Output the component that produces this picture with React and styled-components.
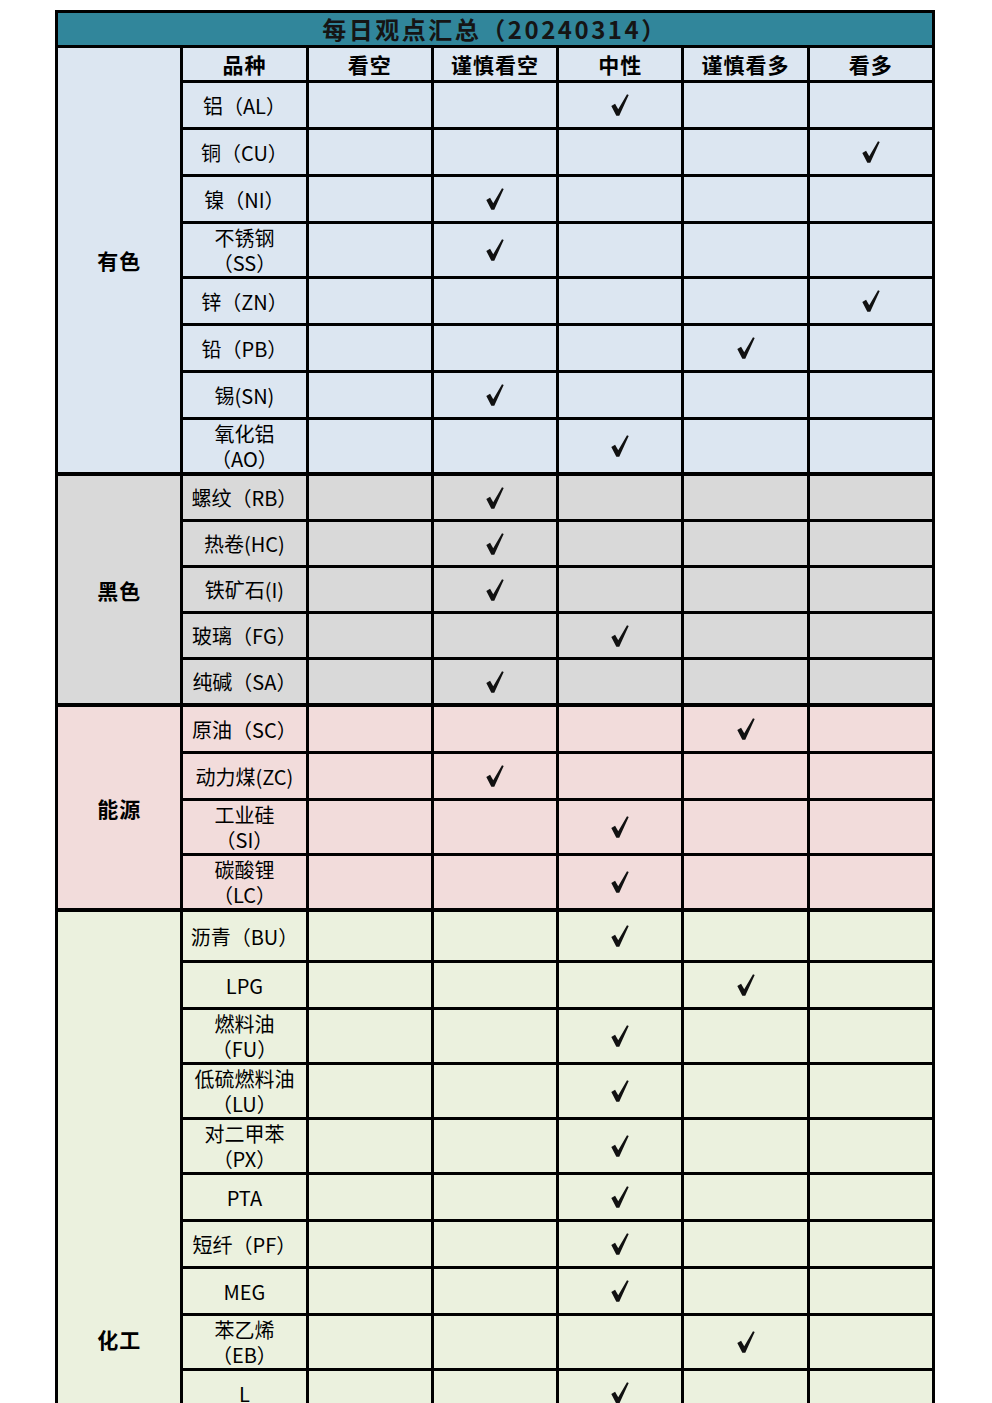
import React from "react";
import styled, { createGlobalStyle } from "styled-components";

// colors
const colors = {
  title: "#31869b",
  line: "#000000",
  nonferrous: "#dce6f1",
  ferrous: "#d9d9d9",
  energy: "#f2dcdb",
  chemical: "#ebf1de",
};

const GlobalStyle = createGlobalStyle`
  html, body {
    margin: 0;
    padding: 0;
    background: #ffffff;
  }
  body {
    font-family: "Noto Sans CJK SC", "Noto Sans", sans-serif;
    color: #000;
  }
`;

const StylePage = styled.div`
  padding: 10px 2px 0 0;
  display: flex;
  justify-content: center;
  overflow: hidden;
`;

const StyleTable = styled.table`
  width: 880px;
  table-layout: fixed;
  border-collapse: collapse;
  border: 3px solid ${colors.line};
  td,
  th {
    border: 3px solid ${colors.line};
    padding: 0;
    text-align: center;
    vertical-align: middle;
  }
`;

const TitleCell = styled.th`
  background: ${colors.title};
  height: 32px;
  font-size: 24px;
  font-weight: 700;
  color: #151515;
  letter-spacing: 2.5px;
  line-height: 32px;
`;

const HeadCell = styled.th`
  background: ${colors.nonferrous};
  height: 32px;
  font-size: 21px;
  font-weight: 700;
  letter-spacing: 1px;
  line-height: 32px;
`;

const GroupRow = styled.tr`
  & > td {
    border-top-width: ${(p) => (p.$first ? "4px" : "3px")};
  }
`;

const CategoryCell = styled.td`
  background: ${(p) => p.$bg};
  font-size: 21px;
  font-weight: 700;
  letter-spacing: 1px;
`;

const NameCell = styled.td`
  background: ${(p) => p.$bg};
  height: ${(p) => p.$h}px;
  font-size: 20px;
  line-height: 25px;
  white-space: nowrap;
  overflow: hidden;
`;

const MarkCell = styled.td`
  background: ${(p) => p.$bg};
`;

const Check = styled.svg`
  display: block;
  margin: 0 auto;
  width: 18px;
  height: 22px;
`;

const CheckMark = () => (
  <Check viewBox="0 0 17 21">
    <path d="M0.2 11.4 L3.8 9.4 L6.8 14.6 L15.2 0.2 L16.8 1 L7.8 20.8 L5 20.8 Z" fill="#111" />
  </Check>
);

const views = ["看空", "谨慎看空", "中性", "谨慎看多", "看多"];

// mark: index in views, h: row height override
const groups = [
  {
    name: "有色",
    bg: colors.nonferrous,
    h: 44,
    rows: [
      { name: ["铝（AL）"], mark: 2 },
      { name: ["铜（CU）"], mark: 4 },
      { name: ["镍（NI）"], mark: 1 },
      { name: ["不锈钢", "（SS）"], mark: 1 },
      { name: ["锌（ZN）"], mark: 4 },
      { name: ["铅（PB）"], mark: 3 },
      { name: ["锡(SN)"], mark: 1 },
      { name: ["氧化铝", "（AO）"], mark: 2 },
    ],
  },
  {
    name: "黑色",
    bg: colors.ferrous,
    h: 43,
    rows: [
      { name: ["螺纹（RB）"], mark: 1 },
      { name: ["热卷(HC)"], mark: 1 },
      { name: ["铁矿石(I)"], mark: 1 },
      { name: ["玻璃（FG）"], mark: 2 },
      { name: ["纯碱（SA）"], mark: 1 },
    ],
  },
  {
    name: "能源",
    bg: colors.energy,
    h: 44,
    rows: [
      { name: ["原油（SC）"], mark: 3 },
      { name: ["动力煤(ZC)"], mark: 1 },
      { name: ["工业硅", "（SI）"], mark: 2 },
      { name: ["碳酸锂", "（LC）"], mark: 2 },
    ],
  },
  {
    name: "化工",
    bg: colors.chemical,
    h: 44,
    rows: [
      { name: ["沥青（BU）"], mark: 2, h: 48 },
      { name: ["LPG"], mark: 3 },
      { name: ["燃料油", "（FU）"], mark: 2 },
      { name: ["低硫燃料油", "（LU）"], mark: 2 },
      { name: ["对二甲苯", "（PX）"], mark: 2 },
      { name: ["PTA"], mark: 2 },
      { name: ["短纤（PF）"], mark: 2 },
      { name: ["MEG"], mark: 2 },
      { name: ["苯乙烯", "（EB）"], mark: 3 },
      { name: ["L"], mark: 2 },
      { name: ["PP"], mark: 2 },
      { name: ["PVC"], mark: 2 },
      { name: ["甲醇（MA）"], mark: 2 },
      { name: ["尿素（UR）"], mark: 2 },
      { name: ["纸浆（SP）"], mark: 2 },
      { name: ["橡胶", "（RU）"], mark: 2 },
      { name: ["丁二烯橡胶", "（BR）"], mark: 2, h: 58 },
    ],
  },
];

const renderMarks = (row, bg) =>
  views.map((view, i) => (
    <MarkCell key={view} $bg={bg}>
      {row.mark === i && <CheckMark />}
    </MarkCell>
  ));

const renderName = (row, group) => {
  const h = row.h || (row.name.length > 1 ? 52 : group.h);
  return (
    <NameCell $bg={group.bg} $h={h}>
      {row.name.map((line, i) => (
        <div key={i}>{line}</div>
      ))}
    </NameCell>
  );
};

export default function App() {
  return (
    <>
      <GlobalStyle />
      <StylePage>
        <StyleTable>
          <tbody>
            <tr>
              <TitleCell colSpan={7}>每日观点汇总（20240314）</TitleCell>
            </tr>
            {groups.map((group, gi) => {
              const isFirst = gi === 0;
              const span = group.rows.length + (isFirst ? 1 : 0);
              const category = (
                <CategoryCell rowSpan={span} $bg={group.bg}>
                  {group.name}
                </CategoryCell>
              );
              return (
                <React.Fragment key={group.name}>
                  {isFirst && (
                    <tr>
                      {category}
                      <HeadCell>品种</HeadCell>
                      {views.map((view) => (
                        <HeadCell key={view}>{view}</HeadCell>
                      ))}
                    </tr>
                  )}
                  {group.rows.map((row, ri) => (
                    <GroupRow key={row.name.join("")} $first={ri === 0 && !isFirst}>
                      {ri === 0 && !isFirst && category}
                      {renderName(row, group)}
                      {renderMarks(row, group.bg)}
                    </GroupRow>
                  ))}
                </React.Fragment>
              );
            })}
          </tbody>
        </StyleTable>
      </StylePage>
    </>
  );
}
